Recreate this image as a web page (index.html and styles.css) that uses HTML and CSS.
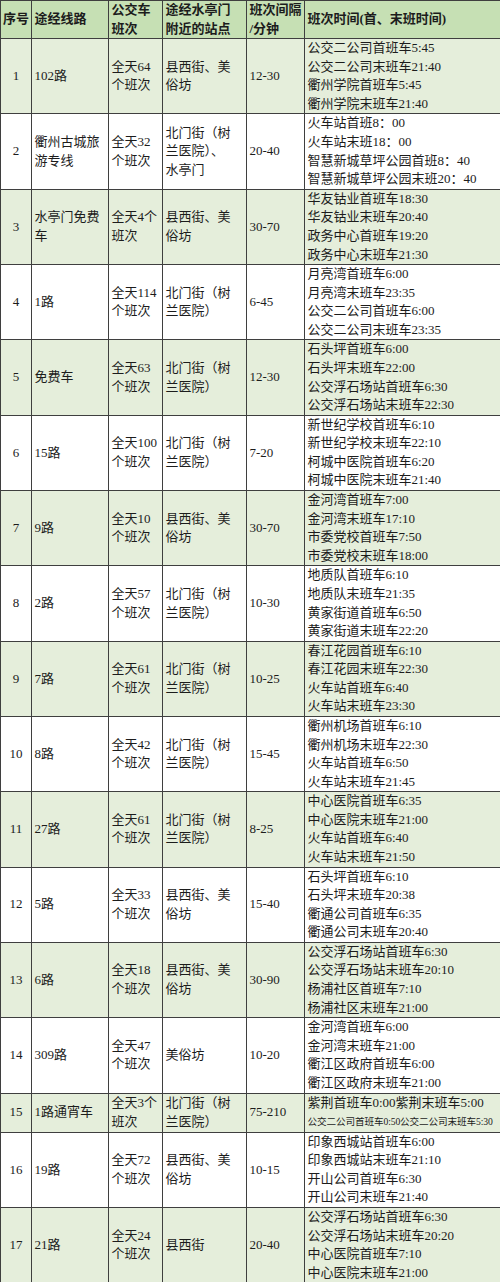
FILE: index.html
```html
<!DOCTYPE html>
<html lang="zh-CN">
<head>
<meta charset="utf-8">
<title>公交班次表</title>
<link rel="stylesheet" href="styles.css">
</head>
<body>
<table class="bus">
<colgroup>
<col class="c-no"><col class="c-line"><col class="c-count"><col class="c-stop"><col class="c-gap"><col class="c-time">
</colgroup>
<thead>
<tr class="head">
<th class="num">序号</th><th>途经线路</th><th>公交车<br>班次</th><th>途经水亭门<br>附近的站点</th><th>班次间隔<br>/分钟</th><th>班次时间(首、末班时间)</th>
</tr>
</thead>
<tbody>
<tr class="g"><td class="num">1</td><td>102路</td><td>全天64<br>个班次</td><td>县西街、美<br>俗坊</td><td>12-30</td><td>公交二公司首班车5:45<br>公交二公司末班车21:40<br>衢州学院首班车5:45<br>衢州学院末班车21:40</td></tr>
<tr><td class="num">2</td><td>衢州古城旅<br>游专线</td><td>全天32<br>个班次</td><td>北门街（树<br>兰医院）、<br>水亭门</td><td>20-40</td><td>火车站首班8：00<br>火车站末班18：00<br>智慧新城草坪公园首班8：40<br>智慧新城草坪公园末班20：40</td></tr>
<tr class="g"><td class="num">3</td><td>水亭门免费<br>车</td><td>全天4个<br>班次</td><td>县西街、美<br>俗坊</td><td>30-70</td><td>华友钴业首班车18:30<br>华友钴业末班车20:40<br>政务中心首班车19:20<br>政务中心末班车21:30</td></tr>
<tr><td class="num">4</td><td>1路</td><td>全天114<br>个班次</td><td>北门街（树<br>兰医院）</td><td>6-45</td><td>月亮湾首班车6:00<br>月亮湾末班车23:35<br>公交二公司首班车6:00<br>公交二公司末班车23:35</td></tr>
<tr class="g"><td class="num">5</td><td>免费车</td><td>全天63<br>个班次</td><td>北门街（树<br>兰医院）</td><td>12-30</td><td>石头坪首班车6:00<br>石头坪末班车22:00<br>公交浮石场站首班车6:30<br>公交浮石场站末班车22:30</td></tr>
<tr><td class="num">6</td><td>15路</td><td>全天100<br>个班次</td><td>北门街（树<br>兰医院）</td><td>7-20</td><td>新世纪学校首班车6:10<br>新世纪学校末班车22:10<br>柯城中医院首班车6:20<br>柯城中医院末班车21:40</td></tr>
<tr class="g"><td class="num">7</td><td>9路</td><td>全天10<br>个班次</td><td>县西街、美<br>俗坊</td><td>30-70</td><td>金河湾首班车7:00<br>金河湾末班车17:10<br>市委党校首班车7:50<br>市委党校末班车18:00</td></tr>
<tr><td class="num">8</td><td>2路</td><td>全天57<br>个班次</td><td>北门街（树<br>兰医院）</td><td>10-30</td><td>地质队首班车6:10<br>地质队末班车21:35<br>黄家街道首班车6:50<br>黄家街道末班车22:20</td></tr>
<tr class="g"><td class="num">9</td><td>7路</td><td>全天61<br>个班次</td><td>北门街（树<br>兰医院）</td><td>10-25</td><td>春江花园首班车6:10<br>春江花园末班车22:30<br>火车站首班车6:40<br>火车站末班车23:30</td></tr>
<tr><td class="num">10</td><td>8路</td><td>全天42<br>个班次</td><td>北门街（树<br>兰医院）</td><td>15-45</td><td>衢州机场首班车6:10<br>衢州机场末班车22:30<br>火车站首班车6:50<br>火车站末班车21:45</td></tr>
<tr class="g"><td class="num">11</td><td>27路</td><td>全天61<br>个班次</td><td>北门街（树<br>兰医院）</td><td>8-25</td><td>中心医院首班车6:35<br>中心医院末班车21:00<br>火车站首班车6:40<br>火车站末班车21:50</td></tr>
<tr><td class="num">12</td><td>5路</td><td>全天33<br>个班次</td><td>县西街、美<br>俗坊</td><td>15-40</td><td>石头坪首班车6:10<br>石头坪末班车20:38<br>衢通公司首班车6:35<br>衢通公司末班车20:40</td></tr>
<tr class="g"><td class="num">13</td><td>6路</td><td>全天18<br>个班次</td><td>县西街、美<br>俗坊</td><td>30-90</td><td>公交浮石场站首班车6:30<br>公交浮石场站末班车20:10<br>杨浦社区首班车7:10<br>杨浦社区末班车21:00</td></tr>
<tr><td class="num">14</td><td>309路</td><td>全天47<br>个班次</td><td>美俗坊</td><td>10-20</td><td>金河湾首班车6:00<br>金河湾末班车21:00<br>衢江区政府首班车6:00<br>衢江区政府末班车21:00</td></tr>
<tr class="g"><td class="num">15</td><td>1路通宵车</td><td>全天3个<br>班次</td><td>北门街（树<br>兰医院）</td><td>75-210</td><td>紫荆首班车0:00紫荆末班车5:00<br><span class="small">公交二公司首班车0:50公交二公司末班车5:30</span></td></tr>
<tr><td class="num">16</td><td>19路</td><td>全天72<br>个班次</td><td>县西街、美<br>俗坊</td><td>10-15</td><td>印象西城站首班车6:00<br>印象西城站末班车21:10<br>开山公司首班车6:30<br>开山公司末班车21:40</td></tr>
<tr class="g"><td class="num">17</td><td>21路</td><td>全天24<br>个班次</td><td>县西街</td><td>20-40</td><td>公交浮石场站首班车6:30<br>公交浮石场站末班车20:20<br>中心医院首班车7:10<br>中心医院末班车21:00</td></tr>
</tbody>
</table>
</body>
</html>
```

FILE: styles.css
```css
html, body {
  margin: 0;
  padding: 0;
  background: #ffffff;
}

.bus {
  width: 500px;
  border-collapse: collapse;
  table-layout: fixed;
  font-family: "Liberation Serif", "Noto Sans CJK SC", serif;
  font-size: 13px;
  line-height: 18.58px;
  color: #1c1c1c;
}

.c-no { width: 31px; }
.c-line { width: 77px; }
.c-count { width: 54px; }
.c-stop { width: 84px; }
.c-gap { width: 58px; }
.c-time { width: 196px; }

.bus th,
.bus td {
  border: 1px solid #3f3f3f;
  padding: 0 2px 0 2.5px;
  text-align: left;
  vertical-align: middle;
  white-space: nowrap;
  overflow: hidden;
}

.bus th {
  font-weight: bold;
  background: #c6e0b4;
}

.bus .num {
  text-align: center;
  padding: 0;
}

.bus tr.g td {
  background: #e5eedb;
}

.small {
  font-size: 9.6px;
  letter-spacing: -0.1px;
}
```
